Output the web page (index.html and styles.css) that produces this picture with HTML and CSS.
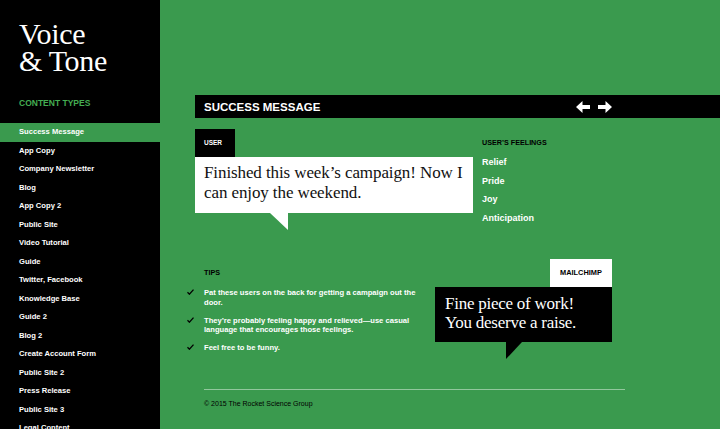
FILE: index.html
```html
<!DOCTYPE html>
<html lang="en">
<head>
<meta charset="utf-8">
<title>Voice &amp; Tone</title>
<link rel="stylesheet" href="styles.css">
</head>
<body>
<aside class="sidebar">
  <h1 class="logo"><span class="logo-line">Voice</span><span class="logo-line">&amp; Tone</span></h1>
  <h2 class="nav-title">CONTENT TYPES</h2>
  <ul class="nav">
    <li class="nav-item active">Success Message</li>
    <li class="nav-item">App Copy</li>
    <li class="nav-item">Company Newsletter</li>
    <li class="nav-item">Blog</li>
    <li class="nav-item">App Copy 2</li>
    <li class="nav-item">Public Site</li>
    <li class="nav-item">Video Tutorial</li>
    <li class="nav-item">Guide</li>
    <li class="nav-item">Twitter, Facebook</li>
    <li class="nav-item">Knowledge Base</li>
    <li class="nav-item">Guide 2</li>
    <li class="nav-item">Blog 2</li>
    <li class="nav-item">Create Account Form</li>
    <li class="nav-item">Public Site 2</li>
    <li class="nav-item">Press Release</li>
    <li class="nav-item">Public Site 3</li>
    <li class="nav-item">Legal Content</li>
  </ul>
</aside>
<main class="main">
  <header class="bar">
    <div class="bar-inner">
      <span class="bar-title">SUCCESS MESSAGE</span>
      <span class="arrows">
        <svg class="arrow" width="14" height="12" viewBox="0 0 14 12"><path d="M0 6 L6.5 0 L6.5 4 L14 4 L14 8 L6.5 8 L6.5 12 Z" fill="#fff"/></svg>
        <svg class="arrow" width="14" height="12" viewBox="0 0 14 12"><path d="M14 6 L7.5 0 L7.5 4 L0 4 L0 8 L7.5 8 L7.5 12 Z" fill="#fff"/></svg>
      </span>
    </div>
  </header>

  <section class="row row-user">
    <div class="user-col">
      <div class="tab tab-dark">USER</div>
      <div class="bubble bubble-light">Finished this week’s campaign! Now I can enjoy the weekend.</div>
    </div>
    <div class="feelings">
      <h3 class="label">USER’S FEELINGS</h3>
      <ul class="feel-list">
        <li>Relief</li>
        <li>Pride</li>
        <li>Joy</li>
        <li>Anticipation</li>
      </ul>
    </div>
  </section>

  <section class="row row-tips">
    <div class="tips">
      <h3 class="label">TIPS</h3>
      <ul class="tip-list">
        <li class="tip"><svg class="check" width="7" height="6" viewBox="0 0 7 6"><path d="M0.5 3.2 L2.4 5.2 L6.5 0.6" fill="none" stroke="#000" stroke-width="1.3"/></svg>Pat these users on the back for getting a campaign out the door.</li>
        <li class="tip"><svg class="check" width="7" height="6" viewBox="0 0 7 6"><path d="M0.5 3.2 L2.4 5.2 L6.5 0.6" fill="none" stroke="#000" stroke-width="1.3"/></svg>They’re probably feeling happy and relieved—use casual language that encourages those feelings.</li>
        <li class="tip"><svg class="check" width="7" height="6" viewBox="0 0 7 6"><path d="M0.5 3.2 L2.4 5.2 L6.5 0.6" fill="none" stroke="#000" stroke-width="1.3"/></svg>Feel free to be funny.</li>
      </ul>
    </div>
    <div class="reply-col">
      <div class="tab tab-light">MAILCHIMP</div>
      <div class="bubble bubble-dark">Fine piece of work!<br>You deserve a raise.</div>
    </div>
  </section>

  <footer class="footer">© 2015 The Rocket Science Group</footer>
</main>
</body>
</html>
```

FILE: styles.css
```css
* { box-sizing: border-box; }
html, body { margin: 0; padding: 0; }
body {
  display: flex;
  width: 720px;
  height: 429px;
  overflow: hidden;
  background: #3a9a4e;
  font-family: "Liberation Sans", Arial, sans-serif;
  color: #fff;
}
ul { list-style: none; margin: 0; padding: 0; }
h1, h2, h3 { margin: 0; font-weight: normal; }

.sidebar {
  width: 160px;
  flex: none;
  background: #000;
  height: 429px;
  overflow: hidden;
}
.logo {
  font-family: "Liberation Serif", "Times New Roman", serif;
  font-size: 30px;
  padding: 20px 0 0 19px;
  letter-spacing: -0.3px;
}
.logo-line {
  display: block;
  height: 27px;
  line-height: 27px;
}
.nav-title {
  font-size: 8.5px;
  font-weight: bold;
  color: #44ad52;
  line-height: 10px;
  padding: 24px 0 0 19px;
}
.nav { margin-top: 15px; }
.nav-item {
  font-size: 7.6px;
  font-weight: bold;
  line-height: 18.5px;
  padding-left: 19px;
  white-space: nowrap;
}
.nav-item.active { background: #3a9a4e; }

.main {
  flex: 1;
  padding: 95px 0 0 35px;
}
.bar {
  background: #000;
  height: 23px;
  padding-left: 9px;
}
.bar-inner {
  width: 408px;
  height: 23px;
  display: flex;
  align-items: center;
  justify-content: space-between;
}
.bar-title {
  font-size: 11.5px;
  font-weight: bold;
}
.arrows { display: flex; gap: 8px; align-items: center; }
.arrow { display: block; }

.row { display: flex; width: 430px; }
.row-user { margin-top: 11px; gap: 9px; }
.user-col { width: 278px; flex: none; }

.tab {
  display: inline-block;
  height: 28px;
  line-height: 28px;
  font-size: 6.5px;
  font-weight: bold;
  padding: 0 9px;
}
.tab-dark { background: #000; color: #fff; width: 40px; }
.tab-light {
  background: #fff;
  color: #000;
  width: 62px;
  text-align: center;
  font-size: 7.4px;
  padding: 0;
}

.bubble {
  position: relative;
  font-family: "Liberation Serif", "Times New Roman", serif;
  font-size: 17px;
  line-height: 19.5px;
}
.bubble::after {
  content: "";
  position: absolute;
  top: 100%;
}
.bubble-light {
  background: #fff;
  color: #111;
  padding: 6px 9px 11px;
  height: 56px;
  letter-spacing: -0.1px;
}
.bubble-light::after {
  left: 75px;
  width: 18px;
  height: 17px;
  background: #fff;
  clip-path: polygon(0 0, 100% 0, 100% 100%);
}
.bubble-dark {
  background: #000;
  color: #fff;
  padding: 8px 10px 8px;
  height: 55px;
  line-height: 18.5px;
  letter-spacing: -0.25px;
}
.bubble-dark::after {
  left: 71px;
  width: 16px;
  height: 17px;
  background: #000;
  clip-path: polygon(0 0, 100% 0, 0 100%);
}

.label {
  font-size: 7.2px;
  font-weight: bold;
  color: #000;
  line-height: 10px;
}
.feelings { padding-top: 9px; }
.feel-list { margin-top: 5px; }
.feel-list li {
  font-size: 9px;
  font-weight: bold;
  line-height: 18.5px;
}

.row-tips { margin-top: 32px; }
.tips {
  width: 240px;
  flex: none;
  padding: 9px 0 0 9px;
}
.tip-list { margin-top: 10px; width: 222px; }
.tip {
  position: relative;
  font-size: 7.6px;
  font-weight: bold;
  line-height: 9.5px;
  margin-bottom: 8.5px;
}
.tip:last-child { margin-bottom: 0; }
.check {
  position: absolute;
  left: -17px;
  top: 1px;
}
.reply-col {
  width: 177px;
  flex: none;
  display: flex;
  flex-direction: column;
  align-items: flex-end;
}
.reply-col .bubble { align-self: stretch; }

.footer {
  margin: 36px 0 0 9px;
  width: 421px;
  border-top: 1px solid rgba(255, 255, 255, 0.45);
  padding-top: 9px;
  font-size: 7px;
  line-height: 10px;
  color: #000;
}
```
